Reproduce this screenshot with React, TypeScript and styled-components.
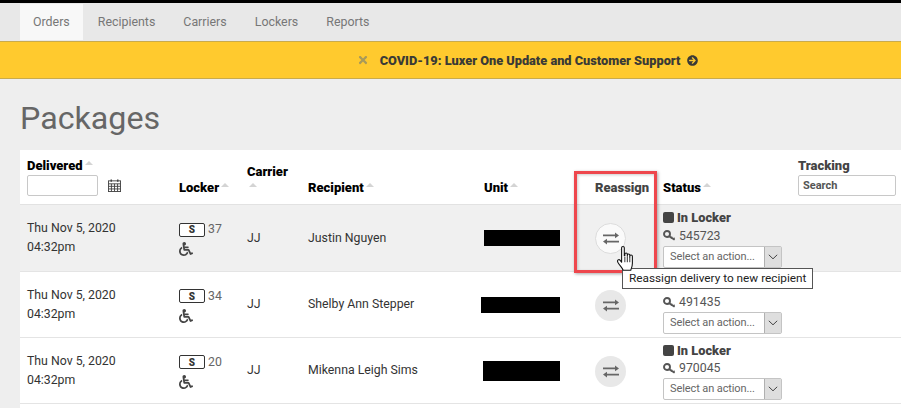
import { createGlobalStyle } from "styled-components";
import styled from "styled-components";
import { FaArrowCircleRight, FaTimes, FaWheelchair } from "react-icons/fa";

const GlobalStyle = createGlobalStyle`
  html, body {
    margin: 0;
    padding: 0;
    background: #eeeeee;
    font-family: Roboto, "Liberation Sans", sans-serif;
    overflow: hidden;
  }
`;

const Page = styled.div`
  position: relative;
  width: 901px;
  height: 408px;
  overflow: hidden;
  border-top: 3px solid #000;
  box-sizing: border-box;
`;

const Nav = styled.nav`
  display: flex;
  gap: 2px;
  height: 38px;
  padding: 1px 0 0 20px;
  box-sizing: border-box;
  background: #e8e8e8;
`;

const Tab = styled.a<{ $active?: boolean }>`
  padding: 0 13px;
  height: 36px;
  line-height: 36px;
  font-size: 12.4px;
  color: #777;
  background: ${(p) => (p.$active ? "#f8f8f8" : "transparent")};
`;

const Banner = styled.div`
  display: flex;
  align-items: center;
  justify-content: center;
  height: 38px;
  padding-left: 154px;
  box-sizing: border-box;
  background: #ffca2e;
  border-top: 1px solid #c9ab4c;
  border-bottom: 1px solid #c9ab4c;
  color: #3a3a36;
  font-size: 12.75px;
  font-weight: 900;
`;

const BannerText = styled.span`
  margin: 0 7px 0 11px;
`;

const Main = styled.main`
  padding: 19px 0 0 20px;
`;

const Title = styled.h1`
  margin: 0 0 12px;
  font-size: 32.2px;
  line-height: 40px;
  font-weight: 400;
  color: #666;
`;

const Table = styled.table`
  width: 881px;
  table-layout: fixed;
  border-collapse: collapse;
  background: #fff;
`;

const Th = styled.th<{ $width: number; $muted?: boolean }>`
  width: ${(p) => p.$width}px;
  padding: 8px 7px 8px;
  box-sizing: border-box;
  vertical-align: bottom;
  text-align: left;
  font-size: 13px;
  line-height: 16px;
  font-weight: 900;
  color: ${(p) => (p.$muted ? "#444" : "#000")};
  border-bottom: 1px solid #e2e2e2;
`;

const Caret = styled.span`
  display: inline-block;
  margin-left: 2px;
  vertical-align: 5px;
  border-left: 4px solid transparent;
  border-right: 4px solid transparent;
  border-bottom: 4px solid #d4d4d4;
`;

const CaretLine = styled.div`
  height: 16px;
  line-height: 16px;
`;

const FilterRow = styled.div`
  display: flex;
  align-items: center;
  gap: 10px;
  margin-top: 1px;
`;

const FilterInput = styled.input<{ $width: number }>`
  width: ${(p) => p.$width}px;
  height: 21px;
  margin-top: 0;
  padding: 0 4px;
  box-sizing: border-box;
  display: block;
  background: #fff;
  border: 1px solid #c8c8c8;
  border-radius: 2px;
  outline: none;
  font-family: inherit;
  font-size: 11px;
  font-weight: 700;
  &::placeholder {
    color: #555;
    opacity: 1;
  }
`;

const Row = styled.tr<{ $hover?: boolean }>`
  height: ${(p) => (p.$hover ? 67 : 66)}px;
  background: ${(p) => (p.$hover ? "#f0f0f0" : "#fff")};
  border-bottom: 1px solid #e4e4e4;
`;

const Td = styled.td`
  padding: 0 7px;
  vertical-align: middle;
  font-size: 12.3px;
  line-height: 19px;
  color: #333;
  overflow: visible;
  white-space: nowrap;
`;

const LockerLine = styled.div`
  display: flex;
  align-items: center;
  gap: 3px;
  color: #666;
`;

const SizeBadge = styled.span`
  width: 26px;
  height: 14px;
  box-sizing: border-box;
  display: flex;
  align-items: center;
  justify-content: center;
  background: #fff;
  border: 1px solid #333;
  border-radius: 2px;
  color: #333;
  font-size: 10px;
  font-weight: 900;
`;

const Wheelchair = styled(FaWheelchair)`
  display: block;
  margin-top: 3px;
  width: 14px;
  height: 14px;
  color: #444;
`;

const Redacted = styled.div<{ $width: number; $height: number; $shift: number }>`
  width: ${(p) => p.$width}px;
  height: ${(p) => p.$height}px;
  margin-left: ${(p) => p.$shift}px;
  background: #000;
`;

const RoundButton = styled.button<{ $hover?: boolean }>`
  width: 31px;
  height: 31px;
  margin-top: 1px;
  padding: 0;
  display: flex;
  align-items: center;
  justify-content: center;
  border-radius: 50%;
  background: ${(p) => (p.$hover ? "#fafafa" : "#e8e8e8")};
  border: ${(p) => (p.$hover ? "1px solid #dcdcdc" : "none")};
`;

const StatusLine = styled.div`
  display: flex;
  align-items: center;
  gap: 3px;
  height: 18px;
  font-size: 12.8px;
  font-weight: 900;
  color: #444;
`;

const StatusSquare = styled.span`
  width: 11px;
  height: 11px;
  border-radius: 2px;
  background: #444;
`;

const KeyLine = styled.div`
  display: flex;
  align-items: center;
  gap: 3px;
  height: 19px;
  color: #555;
`;

const ActionSelect = styled.div`
  display: flex;
  width: 119px;
  height: 22px;
  box-sizing: border-box;
  background: #fff;
  border: 1px solid #c4c4c4;
  border-radius: 2px;
`;

const ActionLabel = styled.span`
  flex: 1;
  padding-left: 6px;
  font-size: 11px;
  line-height: 20px;
  letter-spacing: -0.1px;
  color: #666;
`;

const ActionArrow = styled.span`
  width: 16px;
  display: flex;
  align-items: center;
  justify-content: center;
  background: #dedede;
  border-left: 1px solid #b0b0b0;
`;

const Highlight = styled.div`
  position: absolute;
  left: 574px;
  top: 168px;
  width: 83px;
  height: 102px;
  box-sizing: border-box;
  border: 3px solid #ee474d;
  box-shadow: 1px 1px 3px rgba(0, 0, 0, 0.35), inset 1px 1px 3px rgba(0, 0, 0, 0.2);
  pointer-events: none;
`;

const Tooltip = styled.div`
  position: absolute;
  left: 622px;
  top: 265px;
  height: 21px;
  padding: 0 6px;
  box-sizing: border-box;
  background: #fff;
  border: 1px solid #555;
  font-size: 11.8px;
  line-height: 19px;
  color: #222;
  white-space: nowrap;
`;

const HandCursor = styled.svg`
  position: absolute;
  left: 616px;
  top: 242px;
`;

const CalendarIcon = () => (
  <svg width="13" height="13" viewBox="0 0 14 14" fill="none" stroke="#444" strokeWidth="1">
    <rect x="0.5" y="2" width="13" height="11.5" />
    <path d="M0.5 5.2H13.5M0.5 7.9H13.5M0.5 10.7H13.5M3.7 5.2V13.5M7 5.2V13.5M10.3 5.2V13.5" />
    <path d="M3.5 0.5V3M10.5 0.5V3" strokeWidth="1.6" />
  </svg>
);

const SwapIcon = () => (
  <svg width="18" height="13" viewBox="0 0 18 13" fill="#666">
    <path d="M1 2.6H13V0.4L17 3.4L13 6.2V4.2H1Z" />
    <path d="M17 8.8H5V6.8L1 9.6L5 12.6V10.4H17Z" />
  </svg>
);

const ChevronIcon = () => (
  <svg width="10" height="6" viewBox="0 0 10 6" fill="none" stroke="#444" strokeWidth="1">
    <path d="M0.8 0.8L5 4.8L9.2 0.8" />
  </svg>
);

const KeyIcon = () => (
  <svg width="13" height="12" viewBox="0 0 13 12" fill="none" stroke="#555">
    <circle cx="4" cy="4" r="3" strokeWidth="1.9" />
    <path d="M6.2 6.2L11.6 9.8" strokeWidth="1.8" />
    <path d="M9 6.6L8.2 8.6M11.4 7.6L10.6 9.6" strokeWidth="1.2" />
  </svg>
);

// the tooltip lies over the second row's status line, so no label is drawn there
const rows = [
  { locker: 37, name: "Justin Nguyen", status: "In Locker", code: "545723", bar: [76, 16, 0] },
  { locker: 34, name: "Shelby Ann Stepper", status: "", code: "491435", bar: [79, 16, -3] },
  { locker: 20, name: "Mikenna Leigh Sims", status: "In Locker", code: "970045", bar: [77, 20, -1] },
];

export default function App() {
  return (
    <Page>
      <GlobalStyle />
      <Nav>
        <Tab $active>Orders</Tab>
        <Tab>Recipients</Tab>
        <Tab>Carriers</Tab>
        <Tab>Lockers</Tab>
        <Tab>Reports</Tab>
      </Nav>
      <Banner>
        <FaTimes size={12} color="#a89a5a" />
        <BannerText>COVID-19: Luxer One Update and Customer Support</BannerText>
        <FaArrowCircleRight size={11} />
      </Banner>
      <Main>
        <Title>Packages</Title>
        <Table>
          <thead>
            <tr>
              <Th $width={152}>
                Delivered
                <Caret />
                <FilterRow>
                  <FilterInput $width={71} />
                  <CalendarIcon />
                </FilterRow>
              </Th>
              <Th $width={68}>
                Locker
                <Caret />
              </Th>
              <Th $width={61}>
                Carrier
                <CaretLine>
                  <Caret />
                </CaretLine>
              </Th>
              <Th $width={176}>
                Recipient
                <Caret />
              </Th>
              <Th $width={111}>
                Unit
                <Caret />
              </Th>
              <Th $width={68} $muted>
                Reassign
              </Th>
              <Th $width={135}>
                Status
                <Caret />
              </Th>
              <Th $width={110} $muted>
                Tracking
                <FilterRow>
                  <FilterInput $width={98} placeholder="Search" />
                </FilterRow>
              </Th>
            </tr>
          </thead>
          <tbody>
            {rows.map((row, i) => (
              <Row key={row.code} $hover={i === 0}>
                <Td>
                  Thu Nov 5, 2020
                  <br />
                  04:32pm
                </Td>
                <Td>
                  <LockerLine>
                    <SizeBadge>S</SizeBadge>
                    {row.locker}
                  </LockerLine>
                  <Wheelchair />
                </Td>
                <Td>JJ</Td>
                <Td>{row.name}</Td>
                <Td>
                  <Redacted $width={row.bar[0]} $height={row.bar[1]} $shift={row.bar[2]} />
                </Td>
                <Td>
                  <RoundButton $hover={i === 0}>
                    <SwapIcon />
                  </RoundButton>
                </Td>
                <Td>
                  <StatusLine>
                    {row.status && <StatusSquare />}
                    {row.status}
                  </StatusLine>
                  <KeyLine>
                    <KeyIcon />
                    {row.code}
                  </KeyLine>
                  <ActionSelect>
                    <ActionLabel>Select an action...</ActionLabel>
                    <ActionArrow>
                      <ChevronIcon />
                    </ActionArrow>
                  </ActionSelect>
                </Td>
                <Td />
              </Row>
            ))}
            <Row />
          </tbody>
        </Table>
      </Main>
      <Highlight />
      <Tooltip>Reassign delivery to new recipient</Tooltip>
      <HandCursor width="22" height="28" viewBox="0 0 20 26">
        <path
          d="M5 2.5C5 1 7.5 1 7.5 2.5V10L8 10V8.5C8 7 10.3 7 10.3 8.5V10.5V9.5C10.3 8 12.6 8 12.6 9.5V11V10.3C12.6 9 15 9 15 10.5V17C15 20 14 21.5 13.5 23.5H6.5C5.5 21 3.5 19.5 1.5 16C0.5 14 2.5 13 3.5 14L5 16Z"
          fill="#fff"
          stroke="#111"
          strokeWidth="1"
          strokeLinejoin="round"
        />
        <path d="M8 11V16M10.3 11V16M12.6 11V16" stroke="#111" strokeWidth="0.8" fill="none" />
      </HandCursor>
    </Page>
  );
}
